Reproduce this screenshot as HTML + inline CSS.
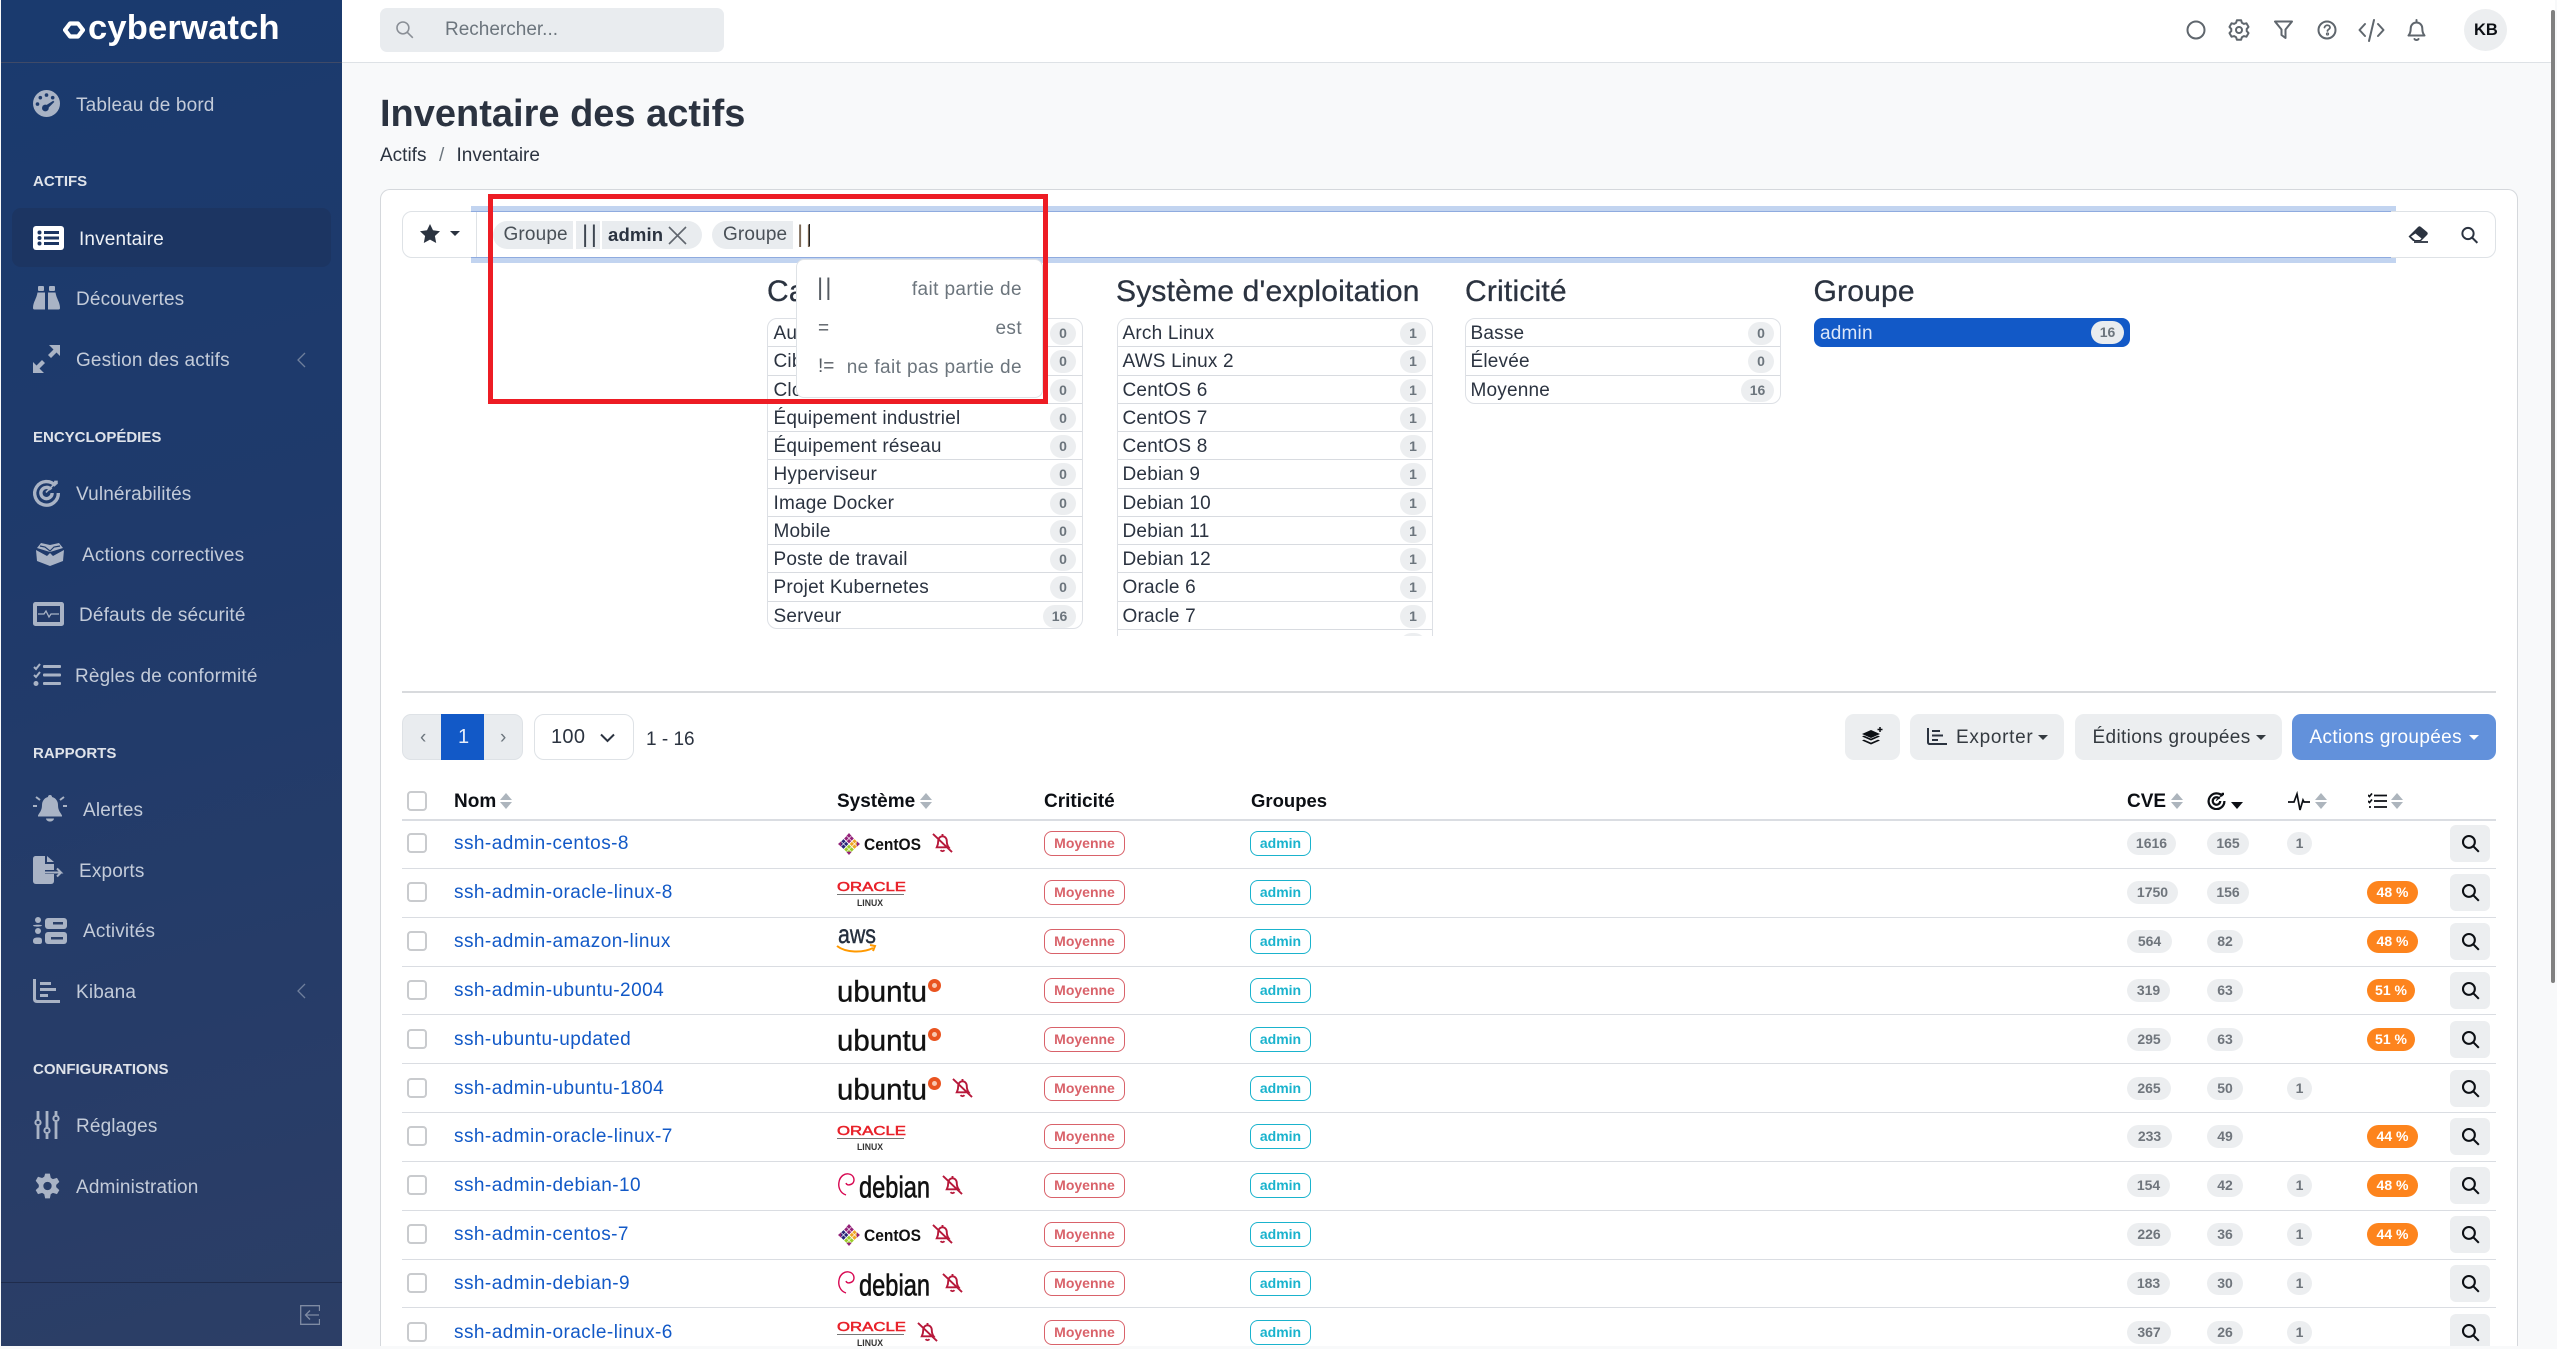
<!DOCTYPE html>
<html lang="fr"><head><meta charset="utf-8"><title>Inventaire des actifs</title>
<style>
*{box-sizing:border-box}
html{margin:0;padding:0;width:2557px;height:1349px;overflow:hidden;background:#f8f9fa}
body{margin:0;padding:0;background:#f8f9fa;width:2557px;height:1349px;position:relative;overflow:hidden;font-family:"Liberation Sans",sans-serif;font-size:19px;color:#2b3340}
.t{position:absolute;white-space:nowrap;height:0;line-height:0;margin-top:2px}
.abs{position:absolute}
#side{position:absolute;left:1px;top:0;width:341px;height:1346px;background:linear-gradient(165deg,#1a3a6e 0%,#1f3a6b 40%,#2c3e66 100%)}
.nav{color:#c3cbd9;letter-spacing:.15px}
.sec{color:#dfe3ea;font-weight:bold;font-size:15px}
.i{position:absolute;fill:#a9b3c5;stroke:none;overflow:visible}
.box{position:absolute;background:#fff;border:1px solid #dadde2;border-radius:10px}
h1{position:absolute;margin:0;left:380px;top:113.500px;height:0;line-height:0;font-size:38px;font-weight:bold;white-space:nowrap;color:#2b3340}
.h2{position:absolute;height:0;line-height:0;top:292px;font-size:30px;letter-spacing:.2px;white-space:nowrap;color:#2b3340;-webkit-text-stroke:.3px #2b3340}
.fl{position:absolute;top:318px;width:316px;border:1px solid #dde0e5;border-radius:10px;background:#fff;overflow:hidden}
.fr{position:relative;height:28.25px;border-bottom:1px solid #d8dbe0;padding-left:5.500px;line-height:30px;letter-spacing:.2px;white-space:nowrap}
.fb{position:absolute;right:6px;top:3px;height:23px;line-height:23px;width:26px;text-align:center;background:#eceef0;border-radius:12px;color:#6c757d;font-size:14px;font-weight:bold;letter-spacing:0}
.chip{position:absolute;top:221px;height:28px;background:#e9ecef;line-height:28px;white-space:nowrap;letter-spacing:.15px}
.dd{position:absolute;height:0;line-height:0;white-space:nowrap;color:#6c757d;letter-spacing:.4px}
.btn{position:absolute;top:714px;height:46px;background:#eceef0;border-radius:9px}
.bt{position:absolute;top:738px;height:0;line-height:0;white-space:nowrap;letter-spacing:.35px;color:#343a40}
.car{position:absolute;top:735px;width:0;height:0;border-left:5px solid transparent;border-right:5px solid transparent;border-top:5px solid #343a40}
.th{position:absolute;top:801.500px;height:0;line-height:0;font-weight:bold;color:#0c0f14;white-space:nowrap}
.ln{position:absolute;left:402px;width:2094px;height:1px;background:#dadde2}
.r{position:absolute;left:0;height:0;width:2557px}
.r>*{position:absolute}
.c{left:407px;top:-11px;width:20px;height:20px;border:2px solid #c9cbce;border-radius:4px;background:#fff}
.n{left:454px;top:0;height:0;line-height:0;color:#1259c7;white-space:nowrap;letter-spacing:.45px}
.m,.a{top:-12.5px;height:25px;line-height:23px;text-align:center;font-size:14px;font-weight:bold;border-radius:8px;background:#fff}
.m{left:1044px;width:81px;border:1.5px solid #d9626a;color:#d9626a}
.a{left:1250px;width:61px;border:1.5px solid #1ab3cd;color:#1ab3cd}
.g,.p{top:-11.5px;height:23px;line-height:23px;text-align:center;font-size:14px;font-weight:bold;border-radius:12px}
.g{background:#eceef0;color:#6f757c}
.p{left:2367px;width:51px;background:#fd841d;color:#fff}
.s{left:2450px;top:-19px;width:40px;height:37px;background:#eceef0;border-radius:6px}
.s svg{position:absolute;left:11px;top:9px;width:19px;height:19px;fill:none;stroke:#0c0f14;stroke-width:2.6}
.bs{top:-10.5px;width:23px;height:20px;fill:none;stroke:#b7183a;stroke-width:2}
.l{left:837px;top:-20px;width:140px;height:40px;overflow:visible}
.sb{position:absolute;width:12px;height:16px;fill:#adb5bd}
</style></head><body>

<svg width="0" height="0" style="position:absolute">
<defs>
<symbol id="pin" viewBox="0 0 24 24"><g transform="rotate(45 12 12)"><rect x="4" y="4" width="7.500" height="7.500" fill="#932279"/><rect x="12.500" y="4" width="7.500" height="7.500" fill="#efa724"/><rect x="4" y="12.500" width="7.500" height="7.500" fill="#262577"/><rect x="12.500" y="12.500" width="7.500" height="7.500" fill="#9ccd2a"/><path d="M7.700 4v7.500M4 7.700h7.500M16.200 4v7.500M12.500 7.700h7.500M7.700 12.500V20M4 16.200h7.500M16.200 12.500V20M12.500 16.200H20" stroke="#fff" stroke-width=".7"/></g><path d="M12 0l3 3.500h-6zM24 12l-3.500 3v-6zM12 24l-3-3.500h6zM0 12l3.500-3v6z" fill="#932279"/></symbol>
<symbol id="bell" viewBox="0 0 24 21"><path d="M6 15c1-2 1.500-4 1.500-6.500C7.500 5.500 9.500 3.500 12 3.500s4.500 2 4.500 5c0 2.500.5 4.500 2 6.500zM10 18c1 1.500 3 1.500 4 0M12 1v2.500M2 1l20 19"/></symbol>
<symbol id="mag" viewBox="0 0 24 24"><circle cx="10" cy="10" r="7.500"/><path d="M15.500 15.500L22.500 22.500"/></symbol>
<symbol id="srt" viewBox="0 0 12 16"><path d="M6 0l6 7H0zM6 16l6-7H0z"/></symbol>
</defs></svg>

<!-- top bar -->
<div class="abs" style="left:342px;top:0;width:2213px;height:63px;background:#fff;border-bottom:1px solid #dee2e6"></div>
<div class="abs" style="left:380px;top:8px;width:344px;height:44px;background:#e9ecef;border-radius:7px"></div>
<svg class="abs" style="left:395px;top:20px;width:19px;height:19px;fill:none;stroke:#8a8f96;stroke-width:2"><use href="#mag"/></svg>
<div class="t" style="left:445px;top:27.500px;color:#6c757d">Rechercher...</div>

<svg class="abs" style="left:2180px;top:14px;width:250px;height:34px;fill:none;stroke:#5f666d;stroke-width:2;stroke-linejoin:round;stroke-linecap:round">
<circle cx="16" cy="16" r="8.500"/>
<g transform="translate(47 4)"><polygon points="9.920,2.220 14.080,2.220 14.920,4.770 16.800,5.850 19.430,5.310 21.510,8.910 19.720,10.910 19.720,13.090 21.510,15.090 19.430,18.690 16.800,18.150 14.920,19.230 14.080,21.780 9.920,21.780 9.080,19.230 7.200,18.150 4.570,18.690 2.490,15.090 4.280,13.090 4.280,10.910 2.490,8.910 4.570,5.310 7.200,5.850 9.080,4.770"/><circle cx="12" cy="12" r="3"/></g>
<path d="M95 7.500h17l-6.500 8v8.500l-4-3v-5.500z"/>
<circle cx="147" cy="16" r="8.500"/><path d="M144.500 13.500c.5-3 5.500-3 5.500 0 0 1.800-2.500 1.800-2.500 3.500" stroke-width="1.800"/><circle cx="147.500" cy="20" r=".6"/>
<path d="M185 10l-5.500 6 5.500 6M198 10l5.500 6-5.500 6M194 6l-5 21"/>
<path d="M228.500 21.500h16c-1.800-2-2.200-4-2.200-7 0-3.500-2.500-6-5.800-6s-5.800 2.500-5.800 6c0 3-.4 5-2.200 7zM234.500 25c.8 1.300 3.200 1.300 4 0M236.500 8.500V6"/>
</svg>
<div class="abs" style="left:2464px;top:9px;width:43px;height:42px;border-radius:50%;background:#eceef0"></div>
<div class="t" style="left:2474px;top:28px;font-size:16.500px;font-weight:bold;color:#0c0f14">KB</div>

<!-- sidebar -->
<div id="side"></div>
<div class="abs" style="left:1px;top:62px;width:341px;height:1px;background:#3f4a68"></div>
<div class="abs" style="left:1px;top:1282px;width:341px;height:1px;background:#1f2c4c"></div>
<svg class="abs" style="left:63px;top:20px;width:22px;height:20px;fill:none;stroke:#fff;stroke-width:4.200;stroke-linejoin:round"><path d="M7 3.500h8l5 6.500-5 6.500H7L2 10z"/></svg>
<div class="t" style="left:88px;top:25.500px;font-size:34.500px;letter-spacing:.2px;font-weight:bold;color:#fff">cyberwatch</div>

<div class="abs" style="left:12px;top:208px;width:319px;height:59px;background:#1c3562;border-radius:9px"></div>

<!-- sidebar icons -->
<svg class="i" style="left:33px;top:90px" width="27" height="27" viewBox="0 0 24 24"><circle cx="12" cy="12" r="12"/><g fill="#1d3a6c"><circle cx="12" cy="4.500" r="1.600"/><circle cx="6.500" cy="6.800" r="1.600"/><circle cx="17.500" cy="6.800" r="1.600"/><circle cx="4" cy="12.500" r="1.600"/><circle cx="11" cy="16" r="3"/><path d="M10 14.500l8-5 1 1-7 7z"/></g></svg>
<svg class="abs" style="left:33px;top:226px" width="31" height="24" viewBox="0 0 31 24"><rect width="31" height="24" rx="3" fill="#fff"/><g fill="#1c3562"><circle cx="6.500" cy="6.500" r="2"/><circle cx="6.500" cy="12" r="2"/><circle cx="6.500" cy="17.500" r="2"/><rect x="11" y="5" width="15" height="3"/><rect x="11" y="10.500" width="15" height="3"/><rect x="11" y="16" width="15" height="3"/></g></svg>
<svg class="i" style="left:33px;top:286px" width="27" height="24" viewBox="0 0 27 24"><rect x="5" y="0" width="6" height="5" rx="1"/><rect x="16" y="0" width="6" height="5" rx="1"/><path d="M4.500 6.500h7.500v17H1.500C.5 23.500 0 23 0 22c0-6 3.500-9 4.500-15.500zM15 6.500h7.500c1 6.500 4.500 9.500 4.500 15.500 0 1-.5 1.500-1.500 1.500H15z"/></svg>
<svg class="i" style="left:33px;top:345px" width="27" height="28" viewBox="0 0 27 28"><path d="M16 0h11v11l-3.500-3.500-5.500 5.500-3-3 5.500-5.500zM11 28H0V17l3.500 3.500L9 15l3 3-5.500 5.500z"/></svg>
<svg class="i" style="left:33px;top:479px" width="27" height="28" viewBox="0 0 24 24"><path fill="none" stroke="#a9b3c5" stroke-width="3" d="M20 5.500A10.500 10.500 0 1 0 22.500 12M16 9a5 5 0 1 0 1 3"/><path stroke="none" d="M11 11l7-7 1-3 3 0 0 3-3 1-7 7z"/></svg>
<svg class="i" style="left:34px;top:542px" width="32" height="24" viewBox="0 0 32 24"><path d="M3 6l13 4 13-4-4-5-9 2-9-2zM2 8l11 6 3-3 3 3 11-6v0l-1 11-13 5-13-5z"/><path d="M6 4l5 1 5 4 4-4 6-1" fill="none" stroke="#1f3b6c" stroke-width="1.200"/></svg>
<svg class="i" style="left:33px;top:602px" width="31" height="24" viewBox="0 0 31 24"><rect width="31" height="24" rx="2.500"/><rect x="4" y="4" width="23" height="16" fill="#233a68"/><path d="M5 12h6l2-3 3 6 2-3h8" fill="none" stroke="#a9b3c5" stroke-width="1.300"/></svg>
<svg class="i" style="left:33px;top:663px" width="28" height="24" viewBox="0 0 28 24"><path d="M1 4l2 2 4-5M1 12l2 2 4-5" fill="none" stroke="#a9b3c5" stroke-width="2"/><circle cx="3" cy="20.500" r="2.500"/><rect x="10" y="2" width="18" height="3" rx="1"/><rect x="10" y="10.500" width="18" height="3" rx="1"/><rect x="10" y="19" width="18" height="3" rx="1"/></svg>
<svg class="i" style="left:33px;top:795px" width="34" height="28" viewBox="0 0 34 28"><path d="M17 0c1.500 0 2 1 2 2 4 1 6 4.500 6 8 0 6 3 8 4 10.500v1H5v-1c1-2.500 4-4.500 4-10.500 0-3.500 2-7 6-8 0-1 .5-2 2-2zM13 23.500h8c-.5 4-7.500 4-8 0z"/><path d="M0 11h4M30 11h4M3 2l4 3M31 2l-4 3" stroke="#a9b3c5" stroke-width="2" fill="none"/></svg>
<svg class="i" style="left:33px;top:856px" width="31" height="28" viewBox="0 0 31 28"><path d="M3 0h9v8h9v6h-9v4h9v7c0 1.500-1 3-3 3H3c-2 0-3-1.500-3-3V3c0-2 1-3 3-3zM14 0l7 6h-7z"/><path d="M11 16.500h17l-4-4M28 16.500l-4 4" fill="none" stroke="#a9b3c5" stroke-width="2"/></svg>
<svg class="i" style="left:33px;top:917px" width="34" height="27" viewBox="0 0 34 27"><circle cx="5" cy="3" r="3"/><circle cx="5" cy="14" r="3"/><path d="M0 24c0-3 2-3.500 5-3.500s4 .5 4 3.500-1 3-4 3-5 0-5-3zM0 8.500c.7-1 9-1 9 0v-.1c0 1.600-9 1.600-9 .1z"/><rect x="12" y="1" width="22" height="11" rx="3"/><rect x="12" y="15" width="22" height="12" rx="3"/><rect x="20" y="5" width="10" height="2.500" fill="#2a3f68"/><rect x="18" y="20" width="12" height="2.500" fill="#2a3f68"/></svg>
<svg class="i" style="left:33px;top:979px" width="27" height="24" viewBox="0 0 27 24"><path d="M0 0h3v19.500c0 1 .5 1.500 1.500 1.500H27v3H4c-2.500 0-4-1.500-4-4z"/><rect x="7" y="3" width="11" height="3"/><rect x="7" y="9" width="16" height="3"/><rect x="7" y="15" width="8" height="3"/></svg>
<svg class="i" style="left:34px;top:1111px" width="26" height="28" viewBox="0 0 26 28"><g fill="none" stroke="#a9b3c5" stroke-width="2.800"><path d="M4 0v8M4 15v13M13 0v16M13 23v5M22 0v4M22 11v17"/><circle cx="4" cy="11.500" r="2.600" stroke-width="2"/><circle cx="13" cy="19.500" r="2.600" stroke-width="2"/><circle cx="22" cy="7.500" r="2.600" stroke-width="2"/></g></svg>
<svg class="i" style="left:34px;top:1172px" width="27" height="28" viewBox="0 0 24 24"><path fill-rule="evenodd" d="M9.920 1h4.160l.84 3.770 1.880 1.080 3.630-1.100 2.080 3.600-2.790 2.600v2.100l2.790 2.600-2.080 3.600-3.630-1.100-1.880 1.080-.84 3.770H9.920l-.84-3.770-1.880-1.080-3.630 1.100-2.080-3.600 2.790-2.600v-2.100L1.490 7.350l2.080-3.600 3.630 1.100 1.880-1.080zM12 8.300a3.700 3.700 0 1 0 0 7.400 3.700 3.700 0 0 0 0-7.400z"/></svg>
<svg class="abs" style="left:300px;top:1305px" width="20" height="20" fill="none" stroke="#7f8ba3" stroke-width="1.300"><path d="M19.500 6V.7H.7v18.600h18.800V14M19 10H6M10 5.500L5.500 10l4.500 4.500"/></svg>
<svg class="abs" style="left:297px;top:352px" width="9" height="16" fill="none" stroke="#6f7f9c" stroke-width="1.300"><path d="M8 1L1 8l7 7"/></svg>
<svg class="abs" style="left:297px;top:983px" width="9" height="16" fill="none" stroke="#6f7f9c" stroke-width="1.300"><path d="M8 1L1 8l7 7"/></svg>

<div class="t nav" style="left:76px;top:104px">Tableau de bord</div>
<div class="t sec" style="left:33px;top:180px">ACTIFS</div>
<div class="t nav" style="left:79px;top:238px;color:#eef1f6">Inventaire</div>
<div class="t nav" style="left:76px;top:298px">Découvertes</div>
<div class="t nav" style="left:76px;top:359px">Gestion des actifs</div>
<div class="t sec" style="left:33px;top:436px">ENCYCLOPÉDIES</div>
<div class="t nav" style="left:76px;top:493px">Vulnérabilités</div>
<div class="t nav" style="left:82px;top:554px">Actions correctives</div>
<div class="t nav" style="left:79px;top:614px">Défauts de sécurité</div>
<div class="t nav" style="left:75px;top:675px">Règles de conformité</div>
<div class="t sec" style="left:33px;top:752px">RAPPORTS</div>
<div class="t nav" style="left:83px;top:809px">Alertes</div>
<div class="t nav" style="left:79px;top:870px">Exports</div>
<div class="t nav" style="left:83px;top:930px">Activités</div>
<div class="t nav" style="left:76px;top:991px">Kibana</div>
<div class="t sec" style="left:33px;top:1068px">CONFIGURATIONS</div>
<div class="t nav" style="left:76px;top:1125px">Réglages</div>
<div class="t nav" style="left:76px;top:1186px">Administration</div>

<!-- main -->
<h1>Inventaire des actifs</h1>
<div class="t" style="left:380px;top:153.500px">Actifs</div>
<div class="t" style="left:439px;top:153.500px;color:#6c757d">/</div>
<div class="t" style="left:456.500px;top:153.500px">Inventaire</div>

<!-- card -->
<div class="abs" style="left:380px;top:189px;width:2138px;height:1157px;background:#fff;border:1px solid #d5d8dc;border-bottom:0;border-radius:10px 10px 0 0"></div>

<!-- search group -->
<div class="box" style="left:402px;top:211px;width:2094px;height:47px;border-color:#dee2e6"></div>
<div class="abs" style="left:476px;top:211px;width:1px;height:47px;background:#dee2e6"></div>
<div class="abs" style="left:471px;top:206px;width:1925px;height:5px;background:#c2d4f0"></div>
<div class="abs" style="left:471px;top:258px;width:1925px;height:5px;background:#c2d4f0"></div>
<div class="abs" style="left:471px;top:211px;width:1920px;height:1px;background:#8fabdf"></div>
<div class="abs" style="left:471px;top:257px;width:1920px;height:1px;background:#8fabdf"></div>
<svg class="abs" style="left:420px;top:224px" width="20" height="19" viewBox="0 0 20 19" fill="#2b3340"><path d="M10 0l3 6.300 7 .9-5.100 4.800 1.300 7L10 15.600 3.800 19l1.300-7L0 7.200l7-.9z"/></svg>
<div class="abs" style="left:450px;top:231px;width:0;height:0;border-left:5px solid transparent;border-right:5px solid transparent;border-top:5px solid #2b3340"></div>
<div class="chip" style="left:493px;width:80px;border-radius:14px 0 0 14px;padding-left:10.500px;color:#495057">Groupe</div>
<div class="chip" style="left:576px;width:24px"></div>
<div class="t" style="left:582px;top:233px;font-size:24px;letter-spacing:2.500px;color:#3d4550">||</div>
<div class="chip" style="left:602px;width:100px;border-radius:0 14px 14px 0;padding-left:6px;font-weight:bold;font-size:18.500px;color:#2b3340">admin</div>
<svg class="abs" style="left:668px;top:226px" width="19" height="19" fill="none" stroke="#60666e" stroke-width="1.600"><path d="M1 1l17 17M18 1L1 18"/></svg>
<div class="chip" style="left:712px;width:81px;border-radius:14px 0 0 14px;padding-left:11px;color:#495057">Groupe</div>
<div class="t" style="left:797px;top:233px;font-size:24px;letter-spacing:2.500px;color:#7d6a58">||</div>
<div class="abs" style="left:809px;top:224px;width:1px;height:22px;background:#222"></div>
<svg class="abs" style="left:2408px;top:226px" width="20" height="17" viewBox="0 0 20 17"><path d="M1 10L10 1c1-1 2-1 3 0l6 5c1 1 1 2 0 3l-6 6H5l-4-4c-.5-.3-.5-.7 0-1z" fill="#2b3340"/><path d="M3 10.500l4 3.500h5l1.500-1.500-6-5z" fill="#fff"/><path d="M6 16h14" stroke="#2b3340" stroke-width="1.800"/></svg>
<svg class="abs" style="left:2460px;top:226px;width:19px;height:18px;fill:none;stroke:#2b3340;stroke-width:2.600"><use href="#mag"/></svg>

<!-- facets -->
<div class="h2" style="left:767px">Catégorie</div>
<div class="h2" style="left:1116px">Système d'exploitation</div>
<div class="h2" style="left:1465px">Criticité</div>
<div class="h2" style="left:1813.500px">Groupe</div>
<div class="fl" style="left:767px;height:311px">
<div class="fr">Autre<span class="fb">0</span></div>
<div class="fr">Cible<span class="fb">0</span></div>
<div class="fr">Cloud<span class="fb">0</span></div>
<div class="fr">Équipement industriel<span class="fb">0</span></div>
<div class="fr">Équipement réseau<span class="fb">0</span></div>
<div class="fr">Hyperviseur<span class="fb">0</span></div>
<div class="fr">Image Docker<span class="fb">0</span></div>
<div class="fr">Mobile<span class="fb">0</span></div>
<div class="fr">Poste de travail<span class="fb">0</span></div>
<div class="fr">Projet Kubernetes<span class="fb">0</span></div>
<div class="fr" style="border:0">Serveur<span class="fb" style="width:33px">16</span></div>
</div>
<div class="fl" style="left:1117px;height:318px;border-bottom:0;border-radius:10px 10px 0 0">
<div class="fr" style="padding-left:4.500px">Arch Linux<span class="fb">1</span></div>
<div class="fr" style="padding-left:4.500px">AWS Linux 2<span class="fb">1</span></div>
<div class="fr" style="padding-left:4.500px">CentOS 6<span class="fb">1</span></div>
<div class="fr" style="padding-left:4.500px">CentOS 7<span class="fb">1</span></div>
<div class="fr" style="padding-left:4.500px">CentOS 8<span class="fb">1</span></div>
<div class="fr" style="padding-left:4.500px">Debian 9<span class="fb">1</span></div>
<div class="fr" style="padding-left:4.500px">Debian 10<span class="fb">1</span></div>
<div class="fr" style="padding-left:4.500px">Debian 11<span class="fb">1</span></div>
<div class="fr" style="padding-left:4.500px">Debian 12<span class="fb">1</span></div>
<div class="fr" style="padding-left:4.500px">Oracle 6<span class="fb">1</span></div>
<div class="fr" style="padding-left:4.500px">Oracle 7<span class="fb">1</span></div>
<div class="fr" style="padding-left:4.500px">Oracle 8<span class="fb">1</span></div>
</div>
<div class="fl" style="left:1465px;height:86px">
<div class="fr" style="padding-left:4.500px">Basse<span class="fb">0</span></div>
<div class="fr" style="padding-left:4.500px">Élevée<span class="fb">0</span></div>
<div class="fr" style="border:0;padding-left:4.500px">Moyenne<span class="fb" style="width:33px">16</span></div>
</div>
<div class="fl" style="left:1814px;height:29px;background:#1259c7;border:0;border-radius:8px;color:#dbe6f8">
<div class="fr" style="border:0;padding-left:6px;line-height:31px">admin<span class="fb" style="width:33px;background:#e9ecef;top:3px">16</span></div>
</div>

<!-- dropdown -->
<div class="abs" style="left:796px;top:259px;width:247px;height:139px;background:#fff;border:1px solid #dee2e6;border-radius:8px"></div>
<div class="t" style="left:817px;top:286px;font-size:24px;letter-spacing:2px;color:#555b62">||</div>
<div class="dd" style="right:1535px;top:289.500px">fait partie de</div>
<div class="t" style="left:818px;top:327px;color:#555b62">=</div>
<div class="dd" style="right:1535px;top:328.500px">est</div>
<div class="t" style="left:818px;top:365px;color:#555b62">!=</div>
<div class="dd" style="right:1535px;top:367.500px">ne fait pas partie de</div>

<!-- red annotation -->
<div class="abs" style="left:488px;top:194px;width:560px;height:210px;border:5px solid #ed1c24"></div>

<!-- toolbar -->
<div class="abs" style="left:402px;top:691px;width:2094px;height:2px;background:#d8dadd"></div>
<div class="abs" style="left:402px;top:714px;width:121px;height:46px;background:#e9ecef;border-radius:9px;border:1px solid #dee2e6"></div>
<div class="abs" style="left:441px;top:714px;width:43px;height:46px;background:#1259c7"></div>
<div class="t" style="left:458px;top:735px;color:#e8eefa;font-size:20px">1</div>
<div class="t" style="left:420px;top:735.500px;color:#6c757d">‹</div>
<div class="t" style="left:500px;top:735.500px;color:#6c757d">›</div>
<div class="box" style="left:534px;top:714px;width:100px;height:46px;border-color:#dee2e6"></div>
<div class="t" style="left:551px;top:735px;font-size:20px;letter-spacing:.3px">100</div>
<svg class="abs" style="left:600px;top:733px" width="15" height="10" fill="none" stroke="#2b3340" stroke-width="2"><path d="M1 1.500l6.500 6.500L14 1.500"/></svg>
<div class="t" style="left:646px;top:738px">1 - 16</div>

<div class="btn" style="left:1845px;width:55px"></div>
<div class="btn" style="left:1910px;width:154px"></div>
<div class="btn" style="left:2075px;width:207px"></div>
<div class="btn" style="left:2292px;width:204px;background:#6291db"></div>
<svg class="abs" style="left:1862px;top:727px" width="21" height="19" viewBox="0 0 21 19" fill="#0c0f14"><path d="M9 3l9 4-9 4-9-4zM0 9.500l2-.9 7 3 7-3 2 .9-9 4zM0 13.500l2-.9 7 3 7-3 2 .9-9 4z"/><path d="M18 0v5M15.500 2.500h5" stroke="#0c0f14" stroke-width="1.500"/></svg>
<svg class="abs" style="left:1927px;top:728px" width="20" height="17" viewBox="0 0 20 17" fill="#2b3340"><path d="M0 0h2v14c0 .7.300 1 1 1h17v2H3c-2 0-3-1-3-3z"/><rect x="5" y="2" width="8" height="2"/><rect x="5" y="6.500" width="11" height="2"/><rect x="5" y="11" width="6" height="2"/></svg>
<div class="bt" style="left:1956px;letter-spacing:.7px">Exporter</div><div class="car" style="left:2038px"></div>
<div class="bt" style="left:2092.500px">Éditions groupées</div><div class="car" style="left:2256px"></div>
<div class="bt" style="left:2309.500px;color:#fff">Actions groupées</div><div class="car" style="left:2469px;border-top-color:#fff"></div>

<!-- table head -->
<div class="abs" style="left:407px;top:791px;width:20px;height:20px;border:2px solid #c9cbce;border-radius:4px;background:#fff"></div>
<div class="th" style="left:454px">Nom</div><svg class="sb" style="left:500px;top:793px"><use href="#srt"/></svg>
<div class="th" style="left:837px">Système</div><svg class="sb" style="left:920px;top:793px"><use href="#srt"/></svg>
<div class="th" style="left:1044px">Criticité</div>
<div class="th" style="left:1251px;font-size:18.500px;top:801px">Groupes</div>
<div class="th" style="left:2127px">CVE</div><svg class="sb" style="left:2171px;top:793px"><use href="#srt"/></svg>
<svg class="abs" style="left:2207px;top:792px" width="19" height="18" viewBox="0 0 24 24" fill="none" stroke="#0c0f14" stroke-width="3"><path d="M20 5.500A10.500 10.500 0 1 0 22.500 12M16 9a5 5 0 1 0 1 3"/><path fill="#0c0f14" stroke="none" d="M11 11l7-7 1-3 3 0 0 3-3 1-7 7z"/></svg>
<div class="abs" style="left:2231px;top:802px;width:0;height:0;border-left:6px solid transparent;border-right:6px solid transparent;border-top:7px solid #0c0f14"></div>
<svg class="abs" style="left:2288px;top:791px" width="23" height="20" fill="none" stroke="#0c0f14" stroke-width="1.700"><path d="M0 11h6l3-8 3 16 3-10 1 2h6"/></svg><svg class="sb" style="left:2315px;top:793px"><use href="#srt"/></svg>
<svg class="abs" style="left:2368px;top:793px" width="19" height="16" fill="none" stroke="#0c0f14" stroke-width="1.700"><path d="M0 2l1.500 1.500L4 .5M0 8l1.500 1.500L4 6.500M6 2.500h13M6 8h13M6 14h13M1 14h2"/></svg><svg class="sb" style="left:2391px;top:793px"><use href="#srt"/></svg>

<!-- table rows container -->
<div class="abs" style="left:0;top:0;width:2557px;height:1346px;overflow:hidden">
<div class="ln" style="top:819px;height:2px"></div><div class="ln" style="top:868px"></div><div class="ln" style="top:917px"></div><div class="ln" style="top:966px"></div><div class="ln" style="top:1014px"></div><div class="ln" style="top:1063px"></div><div class="ln" style="top:1112px"></div><div class="ln" style="top:1161px"></div><div class="ln" style="top:1210px"></div><div class="ln" style="top:1259px"></div><div class="ln" style="top:1307px"></div>

<div class="r" style="top:843.500px"><div class="c"></div><div class="n">ssh-admin-centos-8</div>
<svg class="l"><use href="#pin" x="1" y="9" width="22" height="22"/><text x="27" y="26" font-size="17" font-weight="bold" textLength="57" lengthAdjust="spacingAndGlyphs" fill="#111">CentOS</text></svg>
<svg class="bs" style="left:931px"><use href="#bell"/></svg>
<div class="m">Moyenne</div><div class="a">admin</div>
<div class="g" style="left:2127px;width:49px">1616</div><div class="g" style="left:2207px;width:42px">165</div><div class="g" style="left:2287px;width:25px">1</div>
<div class="s"><svg><use href="#mag"/></svg></div></div>

<div class="r" style="top:892.500px"><div class="c"></div><div class="n">ssh-admin-oracle-linux-8</div>
<svg class="l"><text x="0" y="18" font-size="13" textLength="69" lengthAdjust="spacingAndGlyphs" fill="#e8222a" stroke="#e8222a" stroke-width=".5">ORACLE</text><rect x="0" y="21" width="67" height="1" fill="#777"/><text x="20" y="33" font-size="9.500" font-weight="bold" textLength="26" lengthAdjust="spacingAndGlyphs" fill="#333">LINUX</text></svg>
<div class="m">Moyenne</div><div class="a">admin</div>
<div class="g" style="left:2127px;width:51px">1750</div><div class="g" style="left:2207px;width:42px">156</div><div class="p">48 %</div>
<div class="s"><svg><use href="#mag"/></svg></div></div>

<div class="r" style="top:941.500px"><div class="c"></div><div class="n">ssh-admin-amazon-linux</div>
<svg class="l"><text x="1" y="21" font-size="26" textLength="38" lengthAdjust="spacingAndGlyphs" fill="#252f3e" stroke="#252f3e" stroke-width=".4">aws</text><path d="M0 24c9 7 26 7 36 2M33 23l5 1-2 5" fill="none" stroke="#f90" stroke-width="2"/></svg>
<div class="m">Moyenne</div><div class="a">admin</div>
<div class="g" style="left:2127px;width:45px">564</div><div class="g" style="left:2207px;width:36px">82</div><div class="p">48 %</div>
<div class="s"><svg><use href="#mag"/></svg></div></div>

<div class="r" style="top:990.500px"><div class="c"></div><div class="n">ssh-admin-ubuntu-2004</div>
<svg class="l"><text x="0" y="30.500" font-size="30" textLength="90" lengthAdjust="spacingAndGlyphs" fill="#111" stroke="#111" stroke-width=".4">ubuntu</text><circle cx="97.500" cy="14.500" r="6.500" fill="#e95420"/><circle cx="97.500" cy="14.500" r="2.500" fill="#f8c8b0"/></svg>
<div class="m">Moyenne</div><div class="a">admin</div>
<div class="g" style="left:2127px;width:43px">319</div><div class="g" style="left:2207px;width:36px">63</div><div class="p" style="width:48px">51 %</div>
<div class="s"><svg><use href="#mag"/></svg></div></div>

<div class="r" style="top:1039.500px"><div class="c"></div><div class="n">ssh-ubuntu-updated</div>
<svg class="l"><text x="0" y="30.500" font-size="30" textLength="90" lengthAdjust="spacingAndGlyphs" fill="#111" stroke="#111" stroke-width=".4">ubuntu</text><circle cx="97.500" cy="14.500" r="6.500" fill="#e95420"/><circle cx="97.500" cy="14.500" r="2.500" fill="#f8c8b0"/></svg>
<div class="m">Moyenne</div><div class="a">admin</div>
<div class="g" style="left:2127px;width:44px">295</div><div class="g" style="left:2207px;width:36px">63</div><div class="p" style="width:48px">51 %</div>
<div class="s"><svg><use href="#mag"/></svg></div></div>

<div class="r" style="top:1088.500px"><div class="c"></div><div class="n">ssh-admin-ubuntu-1804</div>
<svg class="l"><text x="0" y="30.500" font-size="30" textLength="90" lengthAdjust="spacingAndGlyphs" fill="#111" stroke="#111" stroke-width=".4">ubuntu</text><circle cx="97.500" cy="14.500" r="6.500" fill="#e95420"/><circle cx="97.500" cy="14.500" r="2.500" fill="#f8c8b0"/></svg>
<svg class="bs" style="left:951px"><use href="#bell"/></svg>
<div class="m">Moyenne</div><div class="a">admin</div>
<div class="g" style="left:2127px;width:44px">265</div><div class="g" style="left:2207px;width:36px">50</div><div class="g" style="left:2287px;width:25px">1</div>
<div class="s"><svg><use href="#mag"/></svg></div></div>

<div class="r" style="top:1136.500px"><div class="c"></div><div class="n">ssh-admin-oracle-linux-7</div>
<svg class="l"><text x="0" y="18" font-size="13" textLength="69" lengthAdjust="spacingAndGlyphs" fill="#e8222a" stroke="#e8222a" stroke-width=".5">ORACLE</text><rect x="0" y="21" width="67" height="1" fill="#777"/><text x="20" y="33" font-size="9.500" font-weight="bold" textLength="26" lengthAdjust="spacingAndGlyphs" fill="#333">LINUX</text></svg>
<div class="m">Moyenne</div><div class="a">admin</div>
<div class="g" style="left:2127px;width:45px">233</div><div class="g" style="left:2207px;width:36px">49</div><div class="p">44 %</div>
<div class="s"><svg><use href="#mag"/></svg></div></div>

<div class="r" style="top:1185.500px"><div class="c"></div><div class="n">ssh-admin-debian-10</div>
<svg class="l"><path d="M9 29c-6-2-8-8-7-13 1-6 6-9 10-8 5 1 6 6 4 9-2 2-6 3-7 0" fill="none" stroke="#d70751" stroke-width="1.400"/><text x="22" y="31.500" font-size="31" textLength="71" lengthAdjust="spacingAndGlyphs" fill="#111" stroke="#111" stroke-width=".6">debian</text></svg>
<svg class="bs" style="left:941px"><use href="#bell"/></svg>
<div class="m">Moyenne</div><div class="a">admin</div>
<div class="g" style="left:2127px;width:43px">154</div><div class="g" style="left:2207px;width:36px">42</div><div class="g" style="left:2287px;width:25px">1</div><div class="p">48 %</div>
<div class="s"><svg><use href="#mag"/></svg></div></div>

<div class="r" style="top:1234.500px"><div class="c"></div><div class="n">ssh-admin-centos-7</div>
<svg class="l"><use href="#pin" x="1" y="9" width="22" height="22"/><text x="27" y="26" font-size="17" font-weight="bold" textLength="57" lengthAdjust="spacingAndGlyphs" fill="#111">CentOS</text></svg>
<svg class="bs" style="left:931px"><use href="#bell"/></svg>
<div class="m">Moyenne</div><div class="a">admin</div>
<div class="g" style="left:2127px;width:44px">226</div><div class="g" style="left:2207px;width:36px">36</div><div class="g" style="left:2287px;width:25px">1</div><div class="p">44 %</div>
<div class="s"><svg><use href="#mag"/></svg></div></div>

<div class="r" style="top:1283.500px"><div class="c"></div><div class="n">ssh-admin-debian-9</div>
<svg class="l"><path d="M9 29c-6-2-8-8-7-13 1-6 6-9 10-8 5 1 6 6 4 9-2 2-6 3-7 0" fill="none" stroke="#d70751" stroke-width="1.400"/><text x="22" y="31.500" font-size="31" textLength="71" lengthAdjust="spacingAndGlyphs" fill="#111" stroke="#111" stroke-width=".6">debian</text></svg>
<svg class="bs" style="left:941px"><use href="#bell"/></svg>
<div class="m">Moyenne</div><div class="a">admin</div>
<div class="g" style="left:2127px;width:43px">183</div><div class="g" style="left:2207px;width:36px">30</div><div class="g" style="left:2287px;width:25px">1</div>
<div class="s"><svg><use href="#mag"/></svg></div></div>

<div class="r" style="top:1332.500px"><div class="c"></div><div class="n">ssh-admin-oracle-linux-6</div>
<svg class="l"><text x="0" y="18" font-size="13" textLength="69" lengthAdjust="spacingAndGlyphs" fill="#e8222a" stroke="#e8222a" stroke-width=".5">ORACLE</text><rect x="0" y="21" width="67" height="1" fill="#777"/><text x="20" y="33" font-size="9.500" font-weight="bold" textLength="26" lengthAdjust="spacingAndGlyphs" fill="#333">LINUX</text></svg>
<svg class="bs" style="left:916px"><use href="#bell"/></svg>
<div class="m">Moyenne</div><div class="a">admin</div>
<div class="g" style="left:2127px;width:44px">367</div><div class="g" style="left:2207px;width:36px">26</div><div class="g" style="left:2287px;width:25px">1</div>
<div class="s"><svg><use href="#mag"/></svg></div></div>
</div>

<!-- bottom strip + scrollbar -->
<div class="abs" style="left:0;top:1346px;width:2557px;height:3px;background:#f8f9fa"></div>
<div class="abs" style="left:2551px;top:10px;width:4px;height:973px;background:#808080;border-radius:2px"></div>
</body></html>
